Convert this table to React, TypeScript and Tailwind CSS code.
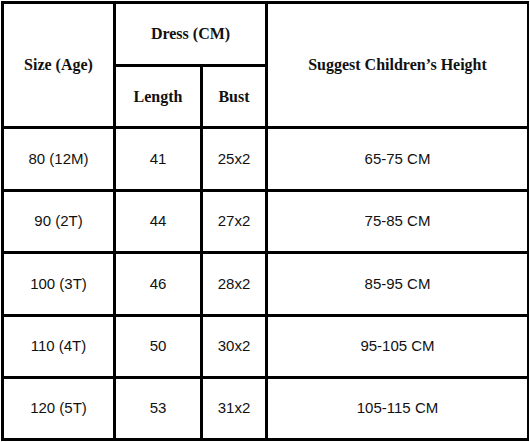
const rows = [
  { size: "80 (12M)", length: "41", bust: "25x2", height: "65-75 CM" },
  { size: "90 (2T)", length: "44", bust: "27x2", height: "75-85 CM" },
  { size: "100 (3T)", length: "46", bust: "28x2", height: "85-95 CM" },
  { size: "110 (4T)", length: "50", bust: "30x2", height: "95-105 CM" },
  { size: "120 (5T)", length: "53", bust: "31x2", height: "105-115 CM" },
];

const head = "bg-white flex items-center justify-center font-bold text-[16px] text-[#111] font-['Liberation_Serif',serif]";
const cell = "bg-white flex items-center justify-center text-[15px] text-[#111] font-['Liberation_Sans',Arial,sans-serif]";

export default function App() {
  return (
    <div className="w-[530px] h-[442px] bg-white p-px">
      <div className="grid grid-cols-[109px_84px_62px_259px] grid-rows-[60px_59px_60px_59px_60px_59px_59px] gap-[3px] p-[3px] bg-black w-[528px]">
        {/* header */}
        <div className={`${head} row-span-2`}>Size (Age)</div>
        <div className={`${head} col-span-2`}>Dress (CM)</div>
        <div className={`${head} row-span-2`}>Suggest Children’s Height</div>
        <div className={head}>Length</div>
        <div className={head}>Bust</div>

        {rows.map((r) => (
          <div key={r.size} className="contents">
            <div className={cell}>{r.size}</div>
            <div className={cell}>{r.length}</div>
            <div className={cell}>{r.bust}</div>
            <div className={cell}>{r.height}</div>
          </div>
        ))}
      </div>
    </div>
  );
}
